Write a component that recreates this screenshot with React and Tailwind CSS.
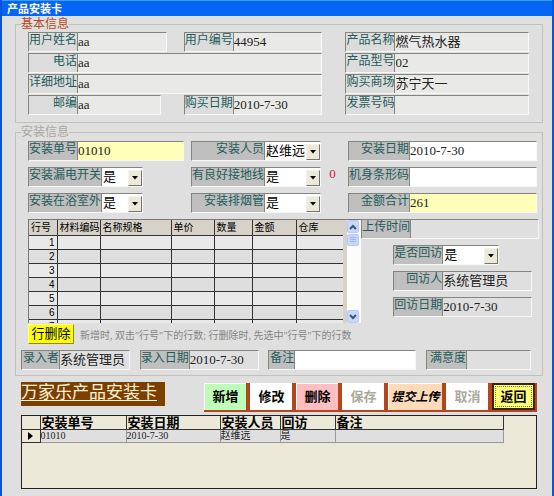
import React, { useId } from 'react';
import clsx from 'clsx';

const lineColumns = [
  { title: '行号', width: 'w-[28px]' },
  { title: '材料编码', width: 'w-[43px]' },
  { title: '名称规格', width: 'w-[71px]' },
  { title: '单价', width: 'w-[43px]' },
  { title: '数量', width: 'w-[38px]' },
  { title: '金额', width: 'w-[44px]' },
  { title: '仓库', width: 'w-[47px]' },
];

const actions = [
  { title: '新增', style: 'w-[42px] bg-[#bdfcb9] text-black text-[13px]' },
  { title: '修改', style: 'w-[42px] bg-white text-black text-[13px]' },
  { title: '删除', style: 'w-[42px] bg-[#ffbfc0] text-black text-[13px]' },
  { title: '保存', style: 'w-[42px] bg-white text-[#aaa99c] text-[13px]', disabled: true },
  { title: '提交上传', style: 'w-[54px] bg-[#ffdbb9] text-black italic text-xs' },
  { title: '取消', style: 'w-[42px] bg-white text-[#aaa99c] text-[13px]', disabled: true },
];

// Sunken label + value pair
function Field({ label, value = '', labelWidth = 'w-12', tone = 'plain', options, className }) {
  const id = useId();
  return (
    <div className={clsx('flex h-5 min-w-0 border border-t-[#858580] border-l-[#858580] border-r-[#f8f8f8] border-b-[#f8f8f8]', className)}>
      <label
        htmlFor={id}
        className={clsx(
          'shrink-0 whitespace-nowrap text-right text-xs leading-[14px] text-[#1f5c5a]',
          labelWidth,
          tone === 'plain' ? 'bg-[#dcdcdc]' : 'bg-[#bfbfbf]'
        )}
      >
        {label}
      </label>
      {options ? (
        <div className="relative min-w-0 flex-1 border-l border-[#858580] bg-white">
          <select id={id} defaultValue={value} className="block h-full w-full appearance-none bg-white pl-px text-[13px] leading-[18px] text-black outline-none">
            {options.map((o) => (
              <option key={o}>{o}</option>
            ))}
          </select>
          <span className="pointer-events-none absolute top-0.5 right-0 flex h-4 w-[14px] items-center justify-center border border-t-[#f4f2e8] border-l-[#f4f2e8] border-r-[#77756a] border-b-[#77756a] bg-[#ece9d8]">
            <svg width="6" height="4" viewBox="0 0 6 4">
              <path d="M0 0h6L3 3.5z" fill="#000" />
            </svg>
          </span>
        </div>
      ) : (
        <input
          id={id}
          defaultValue={value}
          className={clsx(
            'min-w-0 flex-1 border-l border-[#858580] text-[13px] leading-[18px] text-[#222] outline-none',
            tone === 'plain' && 'bg-[#e9e9e7]',
            tone === 'locked' && 'bg-[#dfdfdf]',
            tone === 'edit' && 'bg-white',
            tone === 'key' && 'bg-[#ffffb9]'
          )}
        />
      )}
    </div>
  );
}

function Group({ title, titleColor, className, children }) {
  return (
    <fieldset className={clsx('mr-[9px] ml-[13px] min-w-0 border border-[#c2c0b8] pl-[5px]', className)}>
      <legend className={clsx('text-xs leading-3', titleColor)}>{title}</legend>
      {children}
    </fieldset>
  );
}

function ScrollButton({ up }) {
  return (
    <button type="button" aria-label={up ? '向上' : '向下'} className="flex h-[13px] w-full items-center justify-center rounded-xs border border-[#b8c9f5] bg-[#c8d8fb]">
      <svg width="8" height="6" viewBox="0 0 8 6" fill="none" stroke="#3c5486" strokeWidth="2">
        <path d={up ? 'M1 5l3-3 3 3' : 'M1 1l3 3 3-3'} />
      </svg>
    </button>
  );
}

function LineGrid() {
  return (
    <div className="flex h-[104px] min-w-0 flex-[333] overflow-hidden border-t border-l border-[#777]">
      <div className="min-w-0 flex-1 overflow-hidden bg-[#e9e9e9]">
        <table className="w-full table-fixed border-collapse text-[10px] leading-[13px] text-black">
          <thead>
            <tr className="h-[15px] bg-[#d6d2c9]">
              {lineColumns.map((c) => (
                <th key={c.title} className={clsx('border-r border-b border-[#333] p-0 pl-0.5 text-left font-normal whitespace-nowrap', c.width)}>
                  {c.title}
                </th>
              ))}
            </tr>
          </thead>
          <tbody>
            {[1, 2, 3, 4, 5, 6, 7].map((n) => (
              <tr key={n} className="h-[14px] odd:bg-[#e9e9e9] even:bg-[#dedede]">
                <td className="border-r border-b border-[#333] p-0 pr-0.5 text-right font-['Liberation_Sans']">{n}</td>
                {lineColumns.slice(1).map((c) => (
                  <td key={c.title} className="border-r border-b border-[#333] p-0" />
                ))}
              </tr>
            ))}
          </tbody>
        </table>
      </div>
      <div className="flex w-[18px] flex-col border-l-4 border-[#d6d2c9] bg-[#fcfcfa] pr-0.5">
        <ScrollButton up />
        <div className="mt-px flex h-3 items-center justify-center rounded-xs border border-[#b8c9f5] bg-[#c8d8fb]">
          <svg width="6" height="6" viewBox="0 0 6 6" stroke="#9db4ee">
            <path d="M0 .5h6M0 2.5h6M0 4.5h6" />
          </svg>
        </div>
        <div className="flex-1" />
        <ScrollButton />
      </div>
    </div>
  );
}

function Records() {
  return (
    <div className="mt-[3px] mr-[15px] ml-[19px] h-[74px] border border-[#222] bg-[#ece9d8] pr-8">
      <table className="w-full table-fixed border-collapse">
        <thead>
          <tr className="h-[13px] text-left text-[13px] leading-[13px] font-bold text-black">
            <th className="w-[18px] border-r border-b border-[#333] p-0" />
            <th className="w-[86px] border-r border-b border-[#333] p-0 pl-px">安装单号</th>
            <th className="w-[94px] border-r border-b border-[#333] p-0 pl-px">安装日期</th>
            <th className="w-[60px] border-r border-b border-[#333] p-0 pl-px">安装人员</th>
            <th className="w-[55px] border-r border-b border-[#333] p-0 pl-px">回访</th>
            <th className="border-r border-b border-[#333] p-0 pl-px">备注</th>
          </tr>
        </thead>
        <tbody>
          <tr className="h-[13px] bg-[#dfdfdf] text-[10px] leading-3 text-[#222]">
            <td className="border-r border-b border-[#333] bg-[#ece9d8] p-0">
              <svg className="mx-auto" width="5" height="8" viewBox="0 0 5 8">
                <path d="M0 0l5 4-5 4z" fill="#000" />
              </svg>
            </td>
            <td className="border-r border-b border-[#999] p-0">01010</td>
            <td className="border-r border-b border-[#999] p-0">2010-7-30</td>
            <td className="border-r border-b border-[#999] p-0">赵维远</td>
            <td className="border-r border-b border-[#999] p-0">是</td>
            <td className="border-r border-b border-[#999] p-0" />
          </tr>
        </tbody>
      </table>
    </div>
  );
}

export default function App() {
  const yesNo = ['是', '否'];

  return (
    <div className="min-h-screen border-r-2 border-l-2 border-[#0a54dc] bg-[#dfdfdf] font-['Liberation_Serif','Noto_Sans_CJK_SC',serif]">
      <header className="h-4 border-t border-[#3f9bf5] bg-[#0565f4] pl-[5px]">
        <h1 className="text-[11px] leading-4 font-bold text-white">产品安装卡</h1>
      </header>

      <main className="pt-0.5">
        <Group title="基本信息" titleColor="text-[#b8481c]" className="pr-[13px] pb-[7px]">
          <div className="flex gap-[23px] pt-0.5 pl-[7px]">
            <div className="flex min-w-0 flex-[295] flex-col gap-px">
              <div className="flex gap-[17px]">
                <Field label="用户姓名" value="aa" className="flex-1" />
                <Field label="用户编号" value="44954" className="flex-1" />
              </div>
              <Field label="电话" value="aa" />
              <Field label="详细地址" value="aa" />
              <div className="grid grid-cols-2 gap-[17px]">
                <Field label="邮编" value="aa" className="mr-1.5" />
                <Field label="购买日期" value="2010-7-30" />
              </div>
            </div>
            <div className="flex min-w-0 flex-[184] flex-col gap-px">
              <Field label="产品名称" value="燃气热水器" />
              <Field label="产品型号" value="02" />
              <Field label="购买商场" value="苏宁天一" />
              <Field label="发票号码" />
            </div>
          </div>
        </Group>

        <Group title="安装信息" titleColor="text-[#aaa89c]" className="mt-[3px] pr-[3px] pb-[5px]">
          <div className="pt-[3px] pl-[7px]">
            <div className="grid grid-cols-[163fr_130fr_27px_189fr] gap-y-1.5 pr-0.5">
              <Field label="安装单号" value="01010" tone="key" className="mr-[7px]" />
              <Field label="安装人员" value="赵维远" tone="edit" labelWidth="w-[72px]" options={['赵维远']} />
              <span />
              <Field label="安装日期" value="2010-7-30" tone="edit" labelWidth="w-[60px]" />

              <Field label="安装漏电开关" value="是" tone="edit" labelWidth="w-[72px]" options={yesNo} className="w-[115px]" />
              <Field label="有良好接地线" value="是" tone="edit" labelWidth="w-[72px]" options={yesNo} />
              <span className="pr-1 text-center text-[13px] leading-[14px] text-[#d02030]">0</span>
              <Field label="机身条形码" tone="edit" labelWidth="w-[60px]" />

              <Field label="安装在浴室外" value="是" tone="edit" labelWidth="w-[72px]" options={yesNo} className="w-[115px]" />
              <Field label="安装排烟管" value="是" tone="edit" labelWidth="w-[72px]" options={yesNo} />
              <span />
              <Field label="金额合计" value="261" tone="key" labelWidth="w-[60px]" />
            </div>

            <div className="mt-1.5 flex">
              <LineGrid />
              <div className="flex min-w-0 flex-[178] flex-col gap-1.5">
                <Field label="上传时间" tone="locked" />
                <div className="pr-10 pl-8">
                  <Field label="是否回访" value="是" tone="edit" options={yesNo} />
                </div>
                <div className="flex flex-col gap-1.5 pr-[7px] pl-8">
                  <Field label="回访人" value="系统管理员" tone="locked" />
                  <Field label="回访日期" value="2010-7-30" tone="locked" />
                </div>
              </div>
            </div>

            <div className="mt-px flex items-center gap-1.5">
              <button type="button" className="h-5 w-[46px] border border-t-[#ffffa0] border-l-[#ffffa0] border-r-[#8a8a30] border-b-[#8a8a30] bg-[#ffff00] text-[13px] leading-4 whitespace-nowrap text-black">
                行删除
              </button>
              <p className="pt-1 text-[10px] leading-3 whitespace-nowrap text-[#858585]">
                新增时, 双击"行号"下的行数; 行删除时, 先选中"行号"下的行数
              </p>
            </div>
          </div>

          <div className="mt-1.5 flex justify-between pr-2">
            <Field label="录入者" value="系统管理员" tone="locked" labelWidth="w-[37px]" className="w-[109px]" />
            <Field label="录入日期" value="2010-7-30" tone="locked" className="w-[119px]" />
            <Field label="备注" tone="edit" labelWidth="w-[25px]" className="w-[148px]" />
            <Field label="满意度" tone="locked" labelWidth="w-[39px]" className="w-[105px]" />
          </div>
        </Group>

        <div className="mt-1.5 mr-[15px] ml-[19px] flex items-start justify-between">
          <h2 className="h-6 w-36 bg-[#7c3f00] text-[17px] leading-[22px] whitespace-nowrap text-[#fff3dc] underline underline-offset-2">
            万家乐产品安装卡
          </h2>
          <div className="flex h-[30px] gap-1 border-t border-b-2 border-t-[#dfdfdf] border-b-[#b1461f] bg-[#b1461f] pr-0.5">
            {actions.map((a) => (
              <button
                key={a.title}
                type="button"
                disabled={a.disabled}
                className={clsx('border-t border-l border-white leading-4 font-bold whitespace-nowrap', a.style)}
              >
                {a.title}
              </button>
            ))}
            <button type="button" className="w-[43px] border-2 border-[#3a2410] bg-[#ffff78] p-px text-[13px] leading-4 font-bold text-black">
              <span className="flex h-full items-center justify-center border border-dotted border-[#77752a]">返回</span>
            </button>
          </div>
        </div>

        <Records />
      </main>
    </div>
  );
}
